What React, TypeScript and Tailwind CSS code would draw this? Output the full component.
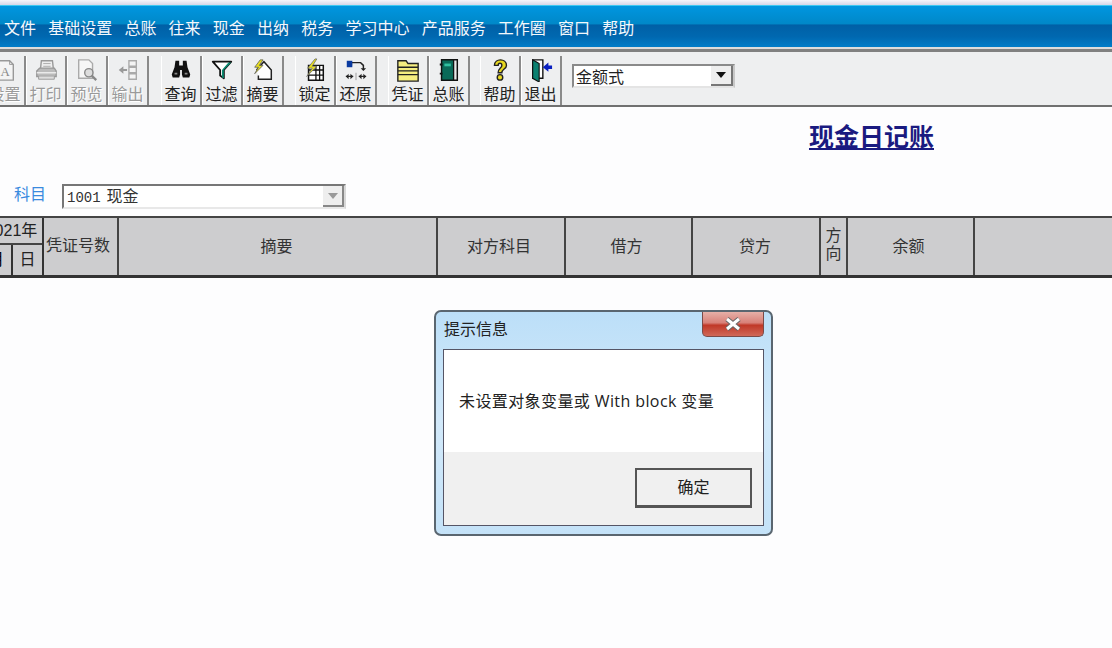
import React from "react";

const CJK = "font-['Liberation_Sans','Noto_Sans_CJK_SC',sans-serif]";
const menu = ["文件", "基础设置", "总账", "往来", "现金", "出纳", "税务", "学习中心", "产品服务", "工作圈", "窗口", "帮助"];

const Svg = ({ children }: { children: React.ReactNode }) => (
  <svg width="24" height="24" viewBox="0 0 26 26" className="block">{children}</svg>
);

const IconSetup = () => (
  <Svg>
    <path d="M5 3h13l4 4v17H5z" fill="#f4f4f4" stroke="#999" strokeWidth="1.5" />
    <path d="M18 3v4h4" fill="none" stroke="#999" />
    <text x="8" y="19" fontSize="14" fontFamily="Liberation Serif" fill="#888">A</text>
  </Svg>
);
const IconPrint = () => (
  <Svg>
    <path d="M8 3h12l1 9H7z" fill="#eee" stroke="#999" strokeWidth="1.5" />
    <path d="M10 6h8M10 9h8" stroke="#aaa" />
    <path d="M3 14l3-3h16l2 3v6H3z" fill="#bbb" stroke="#999" strokeWidth="1.5" />
    <path d="M3 16h21" stroke="#eee" strokeWidth="1.5" />
    <path d="M5 20v3h17v-3" fill="#ddd" stroke="#999" />
  </Svg>
);
const IconPreview = () => (
  <Svg>
    <path d="M4 2h11l4 4v16H4z" fill="#f6f6f6" stroke="#aaa" strokeWidth="1.5" />
    <circle cx="15" cy="16" r="4.500" fill="#ddd" stroke="#888" strokeWidth="1.5" />
    <path d="M18 19l5 5" stroke="#888" strokeWidth="2.5" />
  </Svg>
);
const IconExport = () => (
  <Svg>
    <path d="M14 3h8v6h-8zM14 10h8v6h-8zM14 17h8v6h-8z" fill="#f4f4f4" stroke="#aaa" strokeWidth="1.5" />
    <path d="M3 13l5-4v3h4v2H8v3z" fill="#999" />
  </Svg>
);
const IconFind = () => (
  <Svg>
    <path d="M7 3h4v5h4V3h4l1 7 3 8-1 3h-7l-1-3v-5h-2v5l-1 3H4l-1-3 3-8z" fill="#111" />
    <path d="M6 17h3M17 17h3" stroke="#888" strokeWidth="2" />
  </Svg>
);
const IconFilter = () => (
  <Svg>
    <path d="M3 4h20l-8 9v9l-4-3v-6z" fill="#fff" stroke="#111" strokeWidth="2" strokeLinejoin="round" />
    <path d="M13 13l7-8h3l-8 8v9l-2-1z" fill="#0a8a70" />
  </Svg>
);
const IconSummary = () => (
  <Svg>
    <path d="M6 13l8-9 8 9v10H8v-4" fill="#fff" stroke="#222" strokeWidth="1.6" />
    <path d="M10 2l-6 8h4l-4 7 9-9H9l4-6z" fill="#e8e020" stroke="#555" strokeWidth=".8" />
  </Svg>
);
const IconLock = () => (
  <Svg>
    <path d="M6 8h16v16H6z" fill="#fff" stroke="#111" strokeWidth="1.6" />
    <path d="M14 8v16M6 13h16M6 18.500h16M18 8v16" stroke="#111" strokeWidth="1.4" />
    <path d="M13 1L5 11h5l-6 9 11-11h-5l5-8z" fill="#e8e020" stroke="#666" strokeWidth=".8" />
  </Svg>
);
const IconRestore = () => (
  <Svg>
    <path d="M8 8V5h10l3 3v4" fill="none" stroke="#222" strokeWidth="1.6" />
    <path d="M3 3h6v7H3z" fill="#0a3aa0" />
    <path d="M18 11l3 3 3-3" fill="#222" />
    <path d="M2 20h8M16 20h8" stroke="#222" strokeWidth="1.4" />
    <path d="M2 20l3-3v6zM10 20l-3-3v6zM16 20l3-3v6zM24 20l-3-3v6z" fill="#222" />
    <path d="M13 16v8" stroke="#999" />
  </Svg>
);
const IconVoucher = () => (
  <Svg>
    <path d="M2 6V3h9l2 3h11v19H2z" fill="#f6ee80" stroke="#222" strokeWidth="1.5" />
    <path d="M2 10h22M2 14h22M2 18h22" stroke="#222" strokeWidth="1.4" />
  </Svg>
);
const IconLedger = () => (
  <Svg>
    <path d="M5 2h17v22H5z" fill="#e8e8e8" stroke="#111" strokeWidth="1.6" />
    <path d="M5 2h13v22H5z" fill="#0a6a58" stroke="#111" strokeWidth="1.4" />
    <path d="M8 6h7v3H8z" fill="#30c0a0" />
    <path d="M3 7h3M3 17h3" stroke="#111" strokeWidth="2" />
  </Svg>
);
const IconHelp = () => (
  <Svg>
    <path d="M7 8c0-8 13-8 13 0 0 4-5 4-5 8h-4c0-5 4-5 4-8s-4-3-4 0z" fill="#e8d820" stroke="#222" strokeWidth="1.5" />
    <circle cx="13" cy="21" r="3" fill="#e8d820" stroke="#222" strokeWidth="1.5" />
  </Svg>
);
const IconExit = () => (
  <Svg>
    <path d="M4 2h11v20H4z" fill="#fff" stroke="#111" strokeWidth="1.5" />
    <path d="M4 2l7 4v20l-7-4z" fill="#0a8070" stroke="#111" strokeWidth="1.2" />
    <path d="M15 10l6-5v3h4v4h-4v3z" fill="#0a20c0" />
  </Svg>
);

type Tool = { label: string; Icon: () => React.ReactElement; off?: boolean };
const groups: { ml: string; tools: Tool[] }[] = [
  {
    ml: "ml-[-15px]",
    tools: [
      { label: "设置", Icon: IconSetup, off: true },
      { label: "打印", Icon: IconPrint, off: true },
      { label: "预览", Icon: IconPreview, off: true },
      { label: "输出", Icon: IconExport, off: true },
    ],
  },
  {
    ml: "ml-[12px]",
    tools: [
      { label: "查询", Icon: IconFind },
      { label: "过滤", Icon: IconFilter },
      { label: "摘要", Icon: IconSummary },
    ],
  },
  {
    ml: "ml-[11px]",
    tools: [
      { label: "锁定", Icon: IconLock },
      { label: "还原", Icon: IconRestore },
    ],
  },
  {
    ml: "ml-[11px]",
    tools: [
      { label: "凭证", Icon: IconVoucher },
      { label: "总账", Icon: IconLedger },
    ],
  },
  {
    ml: "ml-[10px]",
    tools: [
      { label: "帮助", Icon: IconHelp },
      { label: "退出", Icon: IconExit },
    ],
  },
];

const ToolButton = ({ label, Icon, off }: Tool) => (
  <div className="w-[41px] h-[49px] flex flex-col items-center border-r-2 border-r-[#8a8a8a] border-l border-l-white pt-[1px] pr-[1px]">
    <div className="h-[26px] flex items-center"><Icon /></div>
    <span
      className={
        off
          ? "mt-[3px] text-[16px] leading-[18px] whitespace-nowrap text-[#9a9a9a] [text-shadow:1px_1px_0_#fff]"
          : "mt-[3px] text-[16px] leading-[18px] whitespace-nowrap text-[#222]"
      }
    >
      {label}
    </span>
  </div>
);

const Arrow = ({ color }: { color: string }) => (
  <svg width="10" height="6" viewBox="0 0 10 6"><path d="M0 0h10L5 6z" fill={color} /></svg>
);

const Hcell = ({ w, children, cls = "" }: { w: string; children?: React.ReactNode; cls?: string }) => (
  <div className={`${w} shrink-0 h-full flex items-center justify-center border-r-2 border-r-[#444] text-[16px] text-[#333] ${cls}`}>{children}</div>
);

export default function App() {
  return (
    <div className={`relative w-[1112px] h-[648px] overflow-hidden bg-[#fdfdfe] flex flex-col ${CJK}`}>
      <div className="h-[5px] shrink-0 bg-gradient-to-b from-[#f6f6fb] to-[#d6d6e8]" />
      <div className="h-[42px] shrink-0 border-t border-t-[#40c8f0] bg-[linear-gradient(to_bottom,#0096e0_0%,#0088c8_44%,#0060a6_46%,#0068b0_75%,#007cc8_100%)] flex items-center gap-[12.2px] pl-[4px] pt-[5px]">
        {menu.map((m) => (
          <span key={m} className="text-[16px] leading-[20px] text-[#f4f8fc] whitespace-nowrap">{m}</span>
        ))}
      </div>
      <div className="h-[60px] shrink-0 bg-[#eeeff0] border-t-[2px] border-t-[#dcdcdc] border-b-[2px] border-b-[#707070] flex flex-col">
        <div className="h-[3px] shrink-0 bg-[#808080]" />
        <div className="flex-1 flex items-end">
          {groups.map((g, i) => (
            <div key={i} className={`${g.ml} flex`}>
              {g.tools.map((t) => <ToolButton key={t.label} {...t} />)}
            </div>
          ))}
          <div className="ml-[10px] mb-[17px] w-[163px] h-[24px] bg-white border-2 border-t-[#8a8a8a] border-l-[#8a8a8a] border-r-[#c8c8c8] border-b-[#e4e4e4] flex items-center justify-between">
            <span className="text-[16px] leading-[20px] pl-[2px] pt-[3px] text-[#222]">金额式</span>
            <div className="w-[22px] h-[20px] bg-[#eeeeee] border-r-2 border-b-2 border-[#777] flex items-center justify-center"><Arrow color="#111" /></div>
          </div>
        </div>
      </div>

      <div className="h-[77px] shrink-0 flex justify-end items-start pt-[12px] pr-[178px]">
        <span className="text-[25px] leading-[32px] font-bold text-[#1a1a80] underline underline-offset-[2px] decoration-2 whitespace-nowrap font-['Noto_Sans_CJK_SC',serif]">现金日记账</span>
      </div>

      <div className="h-[25px] shrink-0 flex items-center pl-[14px]">
        <span className="w-[48px] text-[16px] leading-[20px] text-[#3a8ade] pb-[4px]">科目</span>
        <div className="w-[284px] h-[25px] bg-white border-2 border-t-[#777] border-l-[#777] border-r-[#d8d8d8] border-b-[#e8e8e8] flex items-center justify-between">
          <span className="pl-[3px] pt-[1px] text-[16px] leading-[20px] text-[#333] whitespace-nowrap"><span className="text-[14px] font-['Liberation_Mono',monospace]">1001</span><span className="ml-[6px]">现金</span></span>
          <div className="w-[21px] h-[21px] bg-[#eeeeee] border-r-2 border-b-2 border-[#888] flex items-center justify-center"><Arrow color="#999" /></div>
        </div>
      </div>

      <div className="mt-[7px] h-[62px] shrink-0 flex ml-[-19px] w-[1140px] bg-[#cdcdcf] border-t-[2px] border-t-[#444] border-b-[3px] border-b-[#333]">
        <div className="w-[63px] shrink-0 h-full flex flex-col border-r-2 border-r-[#333]">
          <div className="h-[27px] flex items-center justify-center border-b-2 border-b-[#444] text-[16px] leading-[18px] text-[#222] whitespace-nowrap">2021年</div>
          <div className="flex-1 flex">
            <div className="w-[32px] flex items-center justify-center border-r-2 border-r-[#333] text-[16px]">月</div>
            <div className="flex-1 flex items-center justify-center text-[16px] text-[#222]">日</div>
          </div>
        </div>
        <Hcell w="w-[75px]" cls="whitespace-nowrap justify-start pl-[2px] pb-[1px]">凭证号数</Hcell>
        <Hcell w="w-[319px]" cls="pr-[2px]">摘要</Hcell>
        <Hcell w="w-[128px]" cls="pr-[4px]">对方科目</Hcell>
        <Hcell w="w-[127px]" cls="pr-[4px]">借方</Hcell>
        <Hcell w="w-[128px]" cls="pr-[2px]">贷方</Hcell>
        <Hcell w="w-[27px]" cls="leading-[18px] text-center px-[2px] pb-[3px]">方向</Hcell>
        <Hcell w="w-[127px]" cls="pr-[4px]">余额</Hcell>
      </div>

      {/* Modal dialog floating over the page */}
      <div className="absolute left-[434px] top-[310px] w-[339px] h-[226px] rounded-[7px] border-2 border-[#5a6670] bg-gradient-to-b from-[#bcdff8] via-[#d2e9fa] to-[#c4e2f8] flex flex-col px-[7px] pb-[8px]">
        <div className="h-[37px] shrink-0 flex items-center pb-[2px]">
          <span className="text-[16px] leading-[20px] text-[#222] pl-[1px]">提示信息</span>
        </div>
        <div className="absolute right-[7px] top-0 w-[62px] h-[25px] rounded-b-[5px] border border-t-0 border-[#7a4a48] bg-[linear-gradient(to_bottom,#e6b0a8_0%,#d88078_45%,#c03828_55%,#d06858_100%)] flex items-center justify-center">
          <svg width="18" height="14" viewBox="0 0 18 14">
            <path d="M3 2l12 10M15 2L3 12" stroke="#666" strokeWidth="5" />
            <path d="M3 2l12 10M15 2L3 12" stroke="#fff" strokeWidth="3" />
          </svg>
        </div>
        <div className="flex-1 flex flex-col border border-[#556] bg-white">
          <div className="h-[102px] shrink-0 flex items-center pl-[15px]">
            <span className="text-[16px] leading-[20px] tracking-[0.4px] text-[#222] whitespace-pre font-['Open_Sans','Noto_Sans_CJK_SC',sans-serif]">未设置对象变量或 With block 变量</span>
          </div>
          <div className="flex-1 bg-[#f0f0f0] flex justify-end items-start pt-[16px] pr-[11px]">
            <div className="w-[117px] h-[40px] bg-[#f0f0f0] border-2 border-[#555] border-b-[3px] flex items-center justify-center text-[16px] text-[#222]">确定</div>
          </div>
        </div>
      </div>
    </div>
  );
}
